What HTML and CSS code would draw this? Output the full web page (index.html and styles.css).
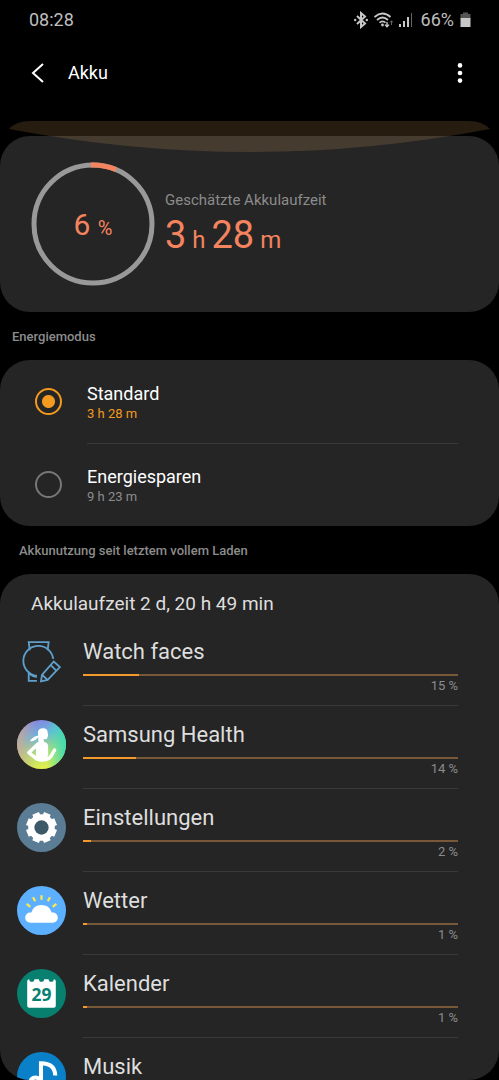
FILE: index.html
```html
<!DOCTYPE html>
<html lang="de">
<head>
    <meta charset="UTF-8">
    <meta name="viewport" content="width=device-width, initial-scale=1">
    <title>Akku</title>
    <link rel="stylesheet" href="styles.css">
</head>
<body>
    <div class="screen">
        <div class="status">
            <span>08:28</span>
            <div class="status-right">
                <svg width="14" height="18" viewBox="0 0 14 18" fill="none" stroke="#c8c8c8" stroke-width="2">
                    <path d="M3 5 L11 12.5 L7 16 V2 L11 5.5 L3 13"/>
                    <circle cx="1.2" cy="9" r="1.2" fill="#c8c8c8" stroke="none"/>
                    <circle cx="12.8" cy="9" r="1.2" fill="#c8c8c8" stroke="none"/>
                </svg>
                <svg width="19" height="18" viewBox="0 0 19 18" fill="none" stroke="#c8c8c8" stroke-width="1.8">
                    <path d="M0.5 6 Q8.5 -1 16.5 6"/>
                    <path d="M3 9 Q8.5 4 14 9"/>
                    <path d="M5.500 11.700 Q8.500 9 11.500 11.700"/>
                    <circle cx="8.5" cy="14" r="1.4" fill="#c8c8c8" stroke="none"/>
                    <path d="M13 11 V15.5 M11 13.6 L13 15.8 L15 13.6" stroke-width="1.4"/>
                    <path d="M17.5 14 V10 M16 11.5 L17.5 9.7 L19 11.5" stroke="#666" stroke-width="1"/>
                </svg>
                <svg width="14" height="18" viewBox="0 0 14 18" fill="#c8c8c8">
                    <rect x="0" y="13" width="2" height="3"/>
                    <rect x="4" y="10" width="2" height="6"/>
                    <rect x="8" y="6" width="2" height="10"/>
                    <rect x="12" y="2" width="1" height="14" fill="#666"/>
                </svg>
                <span class="level">66%</span>
                <svg width="11" height="18" viewBox="0 0 11 18">
                    <path d="M0.5 3 H3 V1.5 H8 V3 H10.5 V8 H0.5z" fill="#555"/>
                    <path d="M0.5 7 H10.5 V16 H0.5z" fill="#c8c8c8"/>
                </svg>
            </div>
        </div>

        <header class="bar">
            <button class="icon-btn" type="button" aria-label="Zurück">
                <svg width="14" height="20" viewBox="0 0 14 20" fill="none" stroke="#fff" stroke-width="2">
                    <path d="M12 1 L2 10 L12 19"/>
                </svg>
            </button>
            <h1>Akku</h1>
            <button class="icon-btn" type="button" aria-label="Weitere Optionen">
                <svg width="6" height="20" viewBox="0 0 6 20" fill="#fff">
                    <circle cx="3" cy="2.4" r="2.3"/>
                    <circle cx="3" cy="10" r="2.3"/>
                    <circle cx="3" cy="17.6" r="2.3"/>
                </svg>
            </button>
        </header>

        <section class="card summary">
            <svg class="edge" viewBox="0 0 499 31" preserveAspectRatio="none">
                <path d="M9 8 Q16 0 30 0 H469 Q482 0 490 8 Q370 31 250 31 Q130 31 9 8z" fill="#ffbb6b" fill-opacity="0.15"/>
            </svg>
            <div class="ring">
                <svg width="124" height="124" viewBox="0 0 124 124" fill="none" stroke-width="5">
                    <circle cx="62" cy="62" r="59" stroke="#999"/>
                    <circle cx="62" cy="62" r="59" stroke="#f4845f" pathLength="100" stroke-dasharray="7 93" transform="rotate(-92 62 62)"/>
                </svg>
                <div class="ring-text">6 <small>%</small></div>
            </div>
            <div class="remaining">
                <div class="estimate-label">Geschätzte Akkulaufzeit</div>
                <div class="estimate">3<small> h </small>28<small> m</small></div>
            </div>
        </section>

        <h2 class="title">Energiemodus</h2>
        <section class="card">
            <div class="mode">
                <input type="radio" name="mode" id="standard" checked>
                <label for="standard">Standard <small>3 h 28 m</small></label>
            </div>
            <div class="mode">
                <input type="radio" name="mode" id="saving">
                <label for="saving">Energiesparen <small>9 h 23 m</small></label>
            </div>
        </section>

        <h2 class="title usage-title">Akkunutzung seit letztem vollem Laden</h2>
        <section class="card usage">
            <h3>Akkulaufzeit 2 d, 20 h 49 min</h3>

            <div class="app">
                <svg class="app-icon" viewBox="0 0 48 48" fill="none" stroke="#5f9fcb" stroke-width="1.8">
                    <path d="M12.500 13 L11.500 5 H31 L30 13"/>
                    <path d="M35.500 21.500 A14.700 14.700 0 1 0 19.500 38"/>
                    <path d="M11.500 34 V43 H19.500 M12 35.500 Q15 39 19.500 39"/>
                    <path d="M24.500 37 L36 24 L42 29.500 L30 42 L23.500 43.500z M24.500 37 L30 42 M33 27.500 L38.500 33"/>
                </svg>
                <div class="app-main">
                    <div class="app-name">Watch faces</div>
                    <div class="track"><div class="fill" style="width: 15%"></div></div>
                    <div class="percent">15 %</div>
                </div>
            </div>

            <div class="app">
                <svg class="app-icon" viewBox="0 0 48 48">
                    <defs>
                        <linearGradient id="health" x1="0.2" y1="0" x2="0.5" y2="1">
                            <stop offset="0" stop-color="#8a7ce0"/>
                            <stop offset="0.35" stop-color="#6cb4dc"/>
                            <stop offset="0.7" stop-color="#b4e070"/>
                            <stop offset="1" stop-color="#e4f04c"/>
                        </linearGradient>
                        <linearGradient id="warm" x1="0" y1="0.5" x2="1" y2="0.5">
                            <stop offset="0" stop-color="#d8a888" stop-opacity="0.8"/>
                            <stop offset="0.4" stop-color="#d0b090" stop-opacity="0"/>
                            <stop offset="0.6" stop-color="#3cdcc0" stop-opacity="0"/>
                            <stop offset="1" stop-color="#3cdcb0"/>
                        </linearGradient>
                    </defs>
                    <circle cx="24" cy="24" r="24" fill="url(#health)"/>
                    <circle cx="24" cy="24" r="24" fill="url(#warm)"/>
                    <g fill="#fff">
                        <path d="M20.500 12 Q21 8 25.500 8 Q30 8 30 12 L30.500 15 L29.500 18 Q28 19.500 26 18.500 L26.500 21.500 Q30.500 22 30.500 26 V34 Q29 40.500 24 40.500 Q20 40.500 18.500 38 V25 L21 21z"/>
                        <path d="M21.500 15.500 Q17 15 12.500 20.500 Q17 22 20.500 17.500z"/>
                    </g>
                    <path d="M20.500 23.500 L11.500 32 L20 38.500 Q31 41 34.500 33.500 L36.800 29.500" fill="none" stroke="#fff" stroke-width="3.4" stroke-linecap="round" stroke-linejoin="round"/>
                </svg>
                <div class="app-main">
                    <div class="app-name">Samsung Health</div>
                    <div class="track"><div class="fill" style="width: 14%"></div></div>
                    <div class="percent">14 %</div>
                </div>
            </div>

            <div class="app">
                <svg class="app-icon" viewBox="0 0 48 48">
                    <circle cx="24" cy="24" r="24" fill="#5b7c95"/>
                    <circle cx="24" cy="24" r="13" fill="#fff"/>
                    <g stroke="#fff" stroke-width="7" transform="rotate(22.5 24 24)">
                        <path d="M24 9 V39 M9 24 H39 M13.4 13.4 L34.6 34.6 M34.6 13.4 L13.4 34.6"/>
                    </g>
                    <circle cx="24" cy="24" r="7" fill="#3d5867"/>
                </svg>
                <div class="app-main">
                    <div class="app-name">Einstellungen</div>
                    <div class="track"><div class="fill" style="width: 2%"></div></div>
                    <div class="percent">2 %</div>
                </div>
            </div>

            <div class="app">
                <svg class="app-icon" viewBox="0 0 48 48">
                    <circle cx="24" cy="24" r="24" fill="#5cb0ff"/>
                    <path d="M24 9 V13.500 M15.700 11 L17.800 15 M32.300 11 L30.200 15 M9.500 17.500 L13 20.500 M38.500 17.500 L35 20.500" stroke="#ffe74a" stroke-width="2.2"/>
                    <path d="M13 36 A5 5 0 0 1 13 26 H14 A10.5 10.5 0 0 1 34 26 H35 A5 5 0 0 1 35 36z" fill="#fff"/>
                </svg>
                <div class="app-main">
                    <div class="app-name">Wetter</div>
                    <div class="track"><div class="fill" style="width: 1%"></div></div>
                    <div class="percent">1 %</div>
                </div>
            </div>

            <div class="app">
                <svg class="app-icon" viewBox="0 0 48 48">
                    <circle cx="24" cy="24" r="24" fill="#078070"/>
                    <path d="M10 12 Q10 10 12 10 A2.5 2.5 0 0 0 17 10 H21.5 A2.5 2.5 0 0 0 26.5 10 H31 A2.5 2.5 0 0 0 36 10 Q38 10 38 12 V36 Q38 38 36 38 H12 Q10 38 10 36z" fill="#fff"/>
                    <text class="day" x="24" y="31" text-anchor="middle">29</text>
                </svg>
                <div class="app-main">
                    <div class="app-name">Kalender</div>
                    <div class="track"><div class="fill" style="width: 1%"></div></div>
                    <div class="percent">1 %</div>
                </div>
            </div>

            <div class="app">
                <svg class="app-icon" viewBox="0 0 48 48">
                    <circle cx="24" cy="24" r="24" fill="#0a80c8"/>
                    <path d="M23.500 30 V11 Q37 11 37.500 23" fill="none" stroke="#fff" stroke-width="4"/>
                    <circle cx="18" cy="30" r="5" fill="none" stroke="#fff" stroke-width="4"/>
                </svg>
                <div class="app-main">
                    <div class="app-name">Musik</div>
                    <div class="track"><div class="fill" style="width: 1%"></div></div>
                </div>
            </div>
        </section>
    </div>
</body>
</html>
```
FILE: styles.css
```css
html, body {
    margin: 0;
    padding: 0;
    background: #000;
    color: #fff;
    font-family: Roboto, sans-serif;
}

h1, h2, h3 {
    margin: 0;
    font-weight: 400;
}

svg {
    display: block;
}

.screen {
    display: flex;
    flex-direction: column;
    height: 100vh;
    overflow: hidden;
}

.status {
    display: flex;
    justify-content: space-between;
    padding: 8px 28px 8px 29px;
    font-size: 18px;
    line-height: 24px;
    color: #bebebe;
}

.status-right {
    display: flex;
    align-items: center;
    gap: 6px;
}

.level {
    padding-left: 2px;
}

.bar {
    display: flex;
    align-items: center;
    padding: 9px 25px 39px 24px;
}

.bar h1 {
    flex: 1;
    padding-left: 16px;
    font-size: 18px;
    line-height: 48px;
}

.icon-btn {
    display: flex;
    align-items: center;
    justify-content: center;
    width: 28px;
    height: 48px;
    padding: 0;
    border: 0;
    background: none;
}

.card {
    flex-shrink: 0;
    border-radius: 30px;
    background: #252525;
}

.summary {
    display: flex;
    align-items: center;
    gap: 10px;
    position: relative;
    box-sizing: border-box;
    min-height: 176px;
    padding: 0 31px;
}

/* overscroll glow, lies over the card's top edge */
.edge {
    position: absolute;
    left: 0;
    top: -15px;
    width: 100%;
    height: 31px;
}

.ring {
    display: grid;
}

.ring > * {
    grid-area: 1 / 1;
}

.ring-text {
    place-self: center;
    font-size: 30px;
    color: #f4845f;
}

.ring-text small {
    font-size: 20px;
}

.remaining {
    padding-top: 6px;
}

.estimate-label {
    font-size: 15px;
    line-height: 20px;
    color: #8c8c8c;
}

.estimate {
    font-size: 38px;
    line-height: 50px;
    color: #f4845f;
}

.estimate small {
    font-size: 24px;
}

.title {
    padding: 15px 12px 13px;
    font-size: 13px;
    line-height: 20px;
    font-weight: 500;
    color: #8c8c8c;
}

.usage-title {
    padding-left: 19px;
}

.mode {
    display: flex;
    align-items: center;
    gap: 25px;
    height: 83px;
    padding: 0 41px 0 35px;
}

.mode input {
    appearance: none;
    flex-shrink: 0;
    width: 27px;
    height: 27px;
    margin: 0;
    border: 2px solid #777;
    border-radius: 50%;
}

.mode input:checked {
    border-color: #f39a1f;
    background: radial-gradient(circle, #f39a1f 6px, transparent 7px);
}

.mode label {
    display: flex;
    flex: 1;
    flex-direction: column;
    justify-content: center;
    box-sizing: border-box;
    height: 100%;
    padding-top: 2px;
    font-size: 18px;
    line-height: 22px;
}

.mode + .mode label {
    border-top: 1px solid #3a3a3a;
}

.mode small {
    font-size: 13px;
    line-height: 18px;
    color: #8c8c8c;
}

.mode input:checked + label small {
    color: #f39a1f;
}

.usage {
    flex: 1;
    min-height: 0;
    overflow: hidden;
    color: #dedede;
}

.usage h3 {
    padding: 18px 31px 7px;
    font-size: 19px;
    line-height: 24px;
}

.app {
    display: flex;
    gap: 17px;
    padding: 0 41px 0 17px;
}

.app-icon {
    flex-shrink: 0;
    width: 49px;
    height: 49px;
    margin-top: 14px;
}

.app-main {
    flex: 1;
    padding: 15px 0 11px;
    border-bottom: 1px solid #3a3a3a;
}

.app-name {
    font-size: 22px;
    line-height: 28px;
}

.track {
    height: 2px;
    margin-top: 8px;
    background: #77593a;
}

.fill {
    height: 100%;
    background: #f39a2c;
}

.percent {
    margin-top: 2px;
    font-size: 13px;
    line-height: 16px;
    text-align: right;
    color: #8c8c8c;
}

.day {
    font: 700 17px "Open Sans", sans-serif;
    fill: #078070;
}
```
